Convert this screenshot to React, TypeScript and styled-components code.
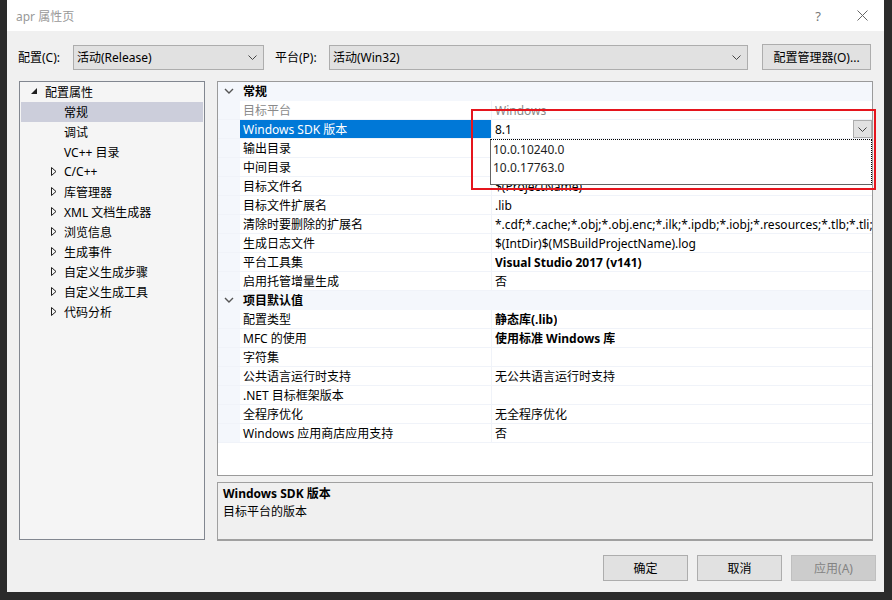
import React from 'react';
import styled, { createGlobalStyle } from 'styled-components';

const GlobalStyle = createGlobalStyle`
  html, body {
    margin: 0;
    padding: 0;
    background: #2b2b2b;
  }
  body {
    font-family: "Noto Sans", "Noto Sans CJK SC", sans-serif;
    font-size: 12px;
    color: #000;
  }
  * {
    box-sizing: border-box;
  }
`;

type PropRow = {
    name: string
    value?: string
    bold?: boolean
    disabled?: boolean
    selected?: boolean
}

type Category = {
    title: string
    rows: PropRow[]
}

// values of 输出目录 / 中间目录 are hidden under the open drop-down
const categories: Category[] = [
    {
        title: '常规',
        rows: [
            {name: '目标平台', value: 'Windows', disabled: true},
            {name: 'Windows SDK 版本', value: '8.1', selected: true},
            {name: '输出目录', value: ''},
            {name: '中间目录', value: ''},
            {name: '目标文件名', value: '$(ProjectName)'},
            {name: '目标文件扩展名', value: '.lib'},
            {name: '清除时要删除的扩展名', value: '*.cdf;*.cache;*.obj;*.obj.enc;*.ilk;*.ipdb;*.iobj;*.resources;*.tlb;*.tli;*.tlh;*.tmp;*.rsp;*.pgc;*.pgd'},
            {name: '生成日志文件', value: '$(IntDir)$(MSBuildProjectName).log'},
            {name: '平台工具集', value: 'Visual Studio 2017 (v141)', bold: true},
            {name: '启用托管增量生成', value: '否'},
        ],
    },
    {
        title: '项目默认值',
        rows: [
            {name: '配置类型', value: '静态库(.lib)', bold: true},
            {name: 'MFC 的使用', value: '使用标准 Windows 库', bold: true},
            {name: '字符集', value: ''},
            {name: '公共语言运行时支持', value: '无公共语言运行时支持'},
            {name: '.NET 目标框架版本', value: ''},
            {name: '全程序优化', value: '无全程序优化'},
            {name: 'Windows 应用商店应用支持', value: '否'},
        ],
    },
];

type TreeNode = {
    label: string
    level: number
    expander?: 'open' | 'closed'
    selected?: boolean
}

const tree: TreeNode[] = [
    {label: '配置属性', level: 0, expander: 'open'},
    {label: '常规', level: 1, selected: true},
    {label: '调试', level: 1},
    {label: 'VC++ 目录', level: 1},
    {label: 'C/C++', level: 1, expander: 'closed'},
    {label: '库管理器', level: 1, expander: 'closed'},
    {label: 'XML 文档生成器', level: 1, expander: 'closed'},
    {label: '浏览信息', level: 1, expander: 'closed'},
    {label: '生成事件', level: 1, expander: 'closed'},
    {label: '自定义生成步骤', level: 1, expander: 'closed'},
    {label: '自定义生成工具', level: 1, expander: 'closed'},
    {label: '代码分析', level: 1, expander: 'closed'},
];

const SmallChevron = () => (
    <svg width="9" height="5" viewBox="0 0 9 5">
        <polyline points="0.5,0.5 4.5,4.5 8.5,0.5" fill="none" stroke="#444" strokeWidth="1"/>
    </svg>
);

const CategoryChevron = () => (
    <svg width="10" height="6" viewBox="0 0 10 6">
        <polyline points="1,1 5,5 9,1" fill="none" stroke="#555" strokeWidth="1.4"/>
    </svg>
);

const OpenTriangle = () => (
    <svg width="7" height="7" viewBox="0 0 7 7">
        <polygon points="6,0 6,6 0,6" fill="#1e1e1e"/>
    </svg>
);

const ClosedTriangle = () => (
    <svg width="6" height="9" viewBox="0 0 6 9">
        <polygon points="0.5,0.5 5,4.5 0.5,8.5" fill="none" stroke="#1e1e1e" strokeWidth="1"/>
    </svg>
);

const CloseIcon = () => (
    <svg width="11" height="11" viewBox="0 0 11 11">
        <path d="M0.5 0.5 L10.5 10.5 M10.5 0.5 L0.5 10.5" stroke="#666" strokeWidth="1"/>
    </svg>
);

export default function App() {
    return (
        <Screen>
            <GlobalStyle/>
            <Window>
                <TitleBar>
                    <Title>apr 属性页</Title>
                    <TitleButton>?</TitleButton>
                    <TitleButton><CloseIcon/></TitleButton>
                </TitleBar>
                <Body>
                    <ConfigRow>
                        <FieldLabel $width={55}>配置(C):</FieldLabel>
                        <Select $width={191}>
                            <span>活动(Release)</span>
                            <SmallChevron/>
                        </Select>
                        <FieldLabel $width={54} style={{marginLeft: 11}}>平台(P):</FieldLabel>
                        <Select $width={419}>
                            <span>活动(Win32)</span>
                            <SmallChevron/>
                        </Select>
                        <ManagerButton>配置管理器(O)...</ManagerButton>
                    </ConfigRow>
                    <Main>
                        <TreePanel>
                            {tree.map(node => (
                                <TreeRow key={node.label} $level={node.level} $selected={node.selected}>
                                    <Expander $level={node.level}>
                                        {node.expander === 'open' && <OpenTriangle/>}
                                        {node.expander === 'closed' && <ClosedTriangle/>}
                                    </Expander>
                                    {node.label}
                                </TreeRow>
                            ))}
                        </TreePanel>
                        <RightColumn>
                            <PropertyGrid>
                                {categories.map(cat => (
                                    <React.Fragment key={cat.title}>
                                        <CategoryRow>
                                            <Gutter><CategoryChevron/></Gutter>
                                            <CategoryTitle>{cat.title}</CategoryTitle>
                                        </CategoryRow>
                                        {cat.rows.map(row => (
                                            <GridRow key={row.name}>
                                                <Gutter/>
                                                <NameCell $selected={row.selected} $disabled={row.disabled}>
                                                    {row.name}
                                                </NameCell>
                                                <ValueCell>
                                                    <ValueText $bold={row.bold} $disabled={row.disabled}>
                                                        {row.value}
                                                    </ValueText>
                                                    {row.selected && (
                                                        <>
                                                            <DropButton><SmallChevron/></DropButton>
                                                            <DropList>
                                                                <DropItem>10.0.10240.0</DropItem>
                                                                <DropItem>10.0.17763.0</DropItem>
                                                            </DropList>
                                                        </>
                                                    )}
                                                </ValueCell>
                                            </GridRow>
                                        ))}
                                    </React.Fragment>
                                ))}
                                <Highlight/>
                            </PropertyGrid>
                            <Description>
                                <DescTitle>Windows SDK 版本</DescTitle>
                                <div>目标平台的版本</div>
                            </Description>
                        </RightColumn>
                    </Main>
                    <Footer>
                        <DialogButton>确定</DialogButton>
                        <DialogButton>取消</DialogButton>
                        <DialogButton $disabled>应用(A)</DialogButton>
                    </Footer>
                </Body>
            </Window>
        </Screen>
    );
}

const Screen = styled.div`
    width: 892px;
    height: 600px;
    padding: 0 8px 8px 7px;
    display: flex;
`

const Window = styled.div`
    flex: 1;
    min-width: 0;
    display: flex;
    flex-direction: column;
    background: #f0f0f0;
`

const TitleBar = styled.div`
    height: 31px;
    flex-shrink: 0;
    background: #fff;
    display: flex;
    align-items: center;
    padding-left: 9px;
`

const Title = styled.span`
    flex: 1;
    color: #999;
`

const TitleButton = styled.span`
    width: 44px;
    display: flex;
    justify-content: center;
    color: #777;
    font-size: 13px;
`

const Body = styled.div`
    flex: 1;
    min-width: 0;
    display: flex;
    flex-direction: column;
    padding: 13px 8px 11px 12px;
`

const ConfigRow = styled.div`
    display: flex;
    align-items: center;
    height: 26px;
    padding-right: 5px;
`

const FieldLabel = styled.span<{ $width: number }>`
    width: ${p => p.$width}px;
    margin-left: -1px;
    flex-shrink: 0;
`

const Select = styled.div<{ $width: number }>`
    width: ${p => p.$width}px;
    height: 25px;
    background: #e1e1e1;
    border: 1px solid #adadad;
    display: flex;
    align-items: center;
    justify-content: space-between;
    padding: 0 6px 0 3px;
`

const ManagerButton = styled.div`
    margin-left: auto;
    width: 109px;
    height: 26px;
    background: #e1e1e1;
    border: 1px solid #adadad;
    display: flex;
    align-items: center;
    justify-content: center;
`

const Main = styled.div`
    display: flex;
    gap: 12px;
    height: 460px;
    margin-top: 11px;
    padding-right: 3px;
    min-width: 0;
`

const TreePanel = styled.div`
    width: 186px;
    flex-shrink: 0;
    height: 459px;
    background: #f5f5f5;
    border: 1px solid #828790;
    padding: 0 1px 1px;
`

const TreeRow = styled.div<{ $level: number; $selected?: boolean }>`
    height: 20px;
    display: flex;
    align-items: center;
    padding-left: ${p => 8 + p.$level * 19}px;
    padding-bottom: 1px;
    background: ${p => (p.$selected ? '#cccedb' : 'transparent')};
`

const Expander = styled.span<{ $level: number }>`
    width: 16px;
    display: flex;
    align-items: center;
    padding-left: ${p => (p.$level === 0 ? 2 : 3)}px;
`

const RightColumn = styled.div`
    flex: 1;
    min-width: 0;
    display: flex;
    flex-direction: column;
    gap: 6px;
`

const PropertyGrid = styled.div`
    position: relative;
    height: 395px;
    background: #fff;
    border: 1px solid #9a9a9a;
`

const GridRow = styled.div`
    display: flex;
    height: 19px;
    border-bottom: 1px solid #f0f3f9;
`

const CategoryRow = styled.div`
    display: flex;
    height: 19px;
    background: #f4f7fc;
    border-bottom: 1px solid #f4f7fc;
`

const Gutter = styled.div`
    width: 22px;
    flex-shrink: 0;
    background: #f4f7fc;
    display: flex;
    align-items: center;
    justify-content: center;
`

const CategoryTitle = styled.div`
    display: flex;
    align-items: center;
    padding-left: 3px;
    font-weight: bold;
`

const NameCell = styled.div<{ $selected?: boolean; $disabled?: boolean }>`
    width: 252px;
    flex-shrink: 0;
    display: flex;
    align-items: center;
    padding-left: 3px;
    border-right: 1px solid #f0f3f9;
    white-space: nowrap;
    overflow: hidden;
    background: ${p => (p.$selected ? '#0078d7' : '#fff')};
    color: ${p => (p.$selected ? '#fff' : p.$disabled ? '#8a8a8a' : '#000')};
`

const ValueCell = styled.div`
    position: relative;
    flex: 1;
    min-width: 0;
    display: flex;
    align-items: center;
    padding-left: 3px;
`

const ValueText = styled.span<{ $bold?: boolean; $disabled?: boolean }>`
    white-space: nowrap;
    overflow: hidden;
    font-weight: ${p => (p.$bold ? 'bold' : 'normal')};
    color: ${p => (p.$disabled ? '#8a8a8a' : '#000')};
`

const DropButton = styled.div`
    position: absolute;
    right: 0;
    top: 0;
    width: 19px;
    height: 18px;
    background: #e1e1e1;
    border: 1px solid #adadad;
    display: flex;
    align-items: center;
    justify-content: center;
`

const DropList = styled.div`
    position: absolute;
    z-index: 2;
    left: -2px;
    right: 0;
    top: 19px;
    height: 46px;
    background: #fff;
    border: 1px solid #646464;
    border-top: 1px dotted #000;
    border-right: 1px dotted #000;
`

const DropItem = styled.div`
    height: 18px;
    display: flex;
    align-items: center;
    padding-left: 2px;
    color: #1e1e1e;
`

const Highlight = styled.div`
    position: absolute;
    z-index: 3;
    left: 253px;
    top: 27px;
    width: 405px;
    height: 81px;
    border: 2px solid #e5151d;
    pointer-events: none;
`

const Description = styled.div`
    height: 59px;
    background: #f0f0f0;
    border: 1px solid #a0a0a0;
    border-bottom-width: 2px;
    padding: 2px 5px;
    line-height: 18px;
`

const DescTitle = styled.div`
    font-weight: bold;
`

const Footer = styled.div`
    display: flex;
    justify-content: flex-end;
    gap: 9px;
    margin-top: 14px;
`

const DialogButton = styled.div<{ $disabled?: boolean }>`
    width: 85px;
    height: 26px;
    display: flex;
    align-items: center;
    justify-content: center;
    background: ${p => (p.$disabled ? '#cccccc' : '#e1e1e1')};
    border: 1px solid ${p => (p.$disabled ? '#bfbfbf' : '#adadad')};
    color: ${p => (p.$disabled ? '#838383' : '#000')};
`
